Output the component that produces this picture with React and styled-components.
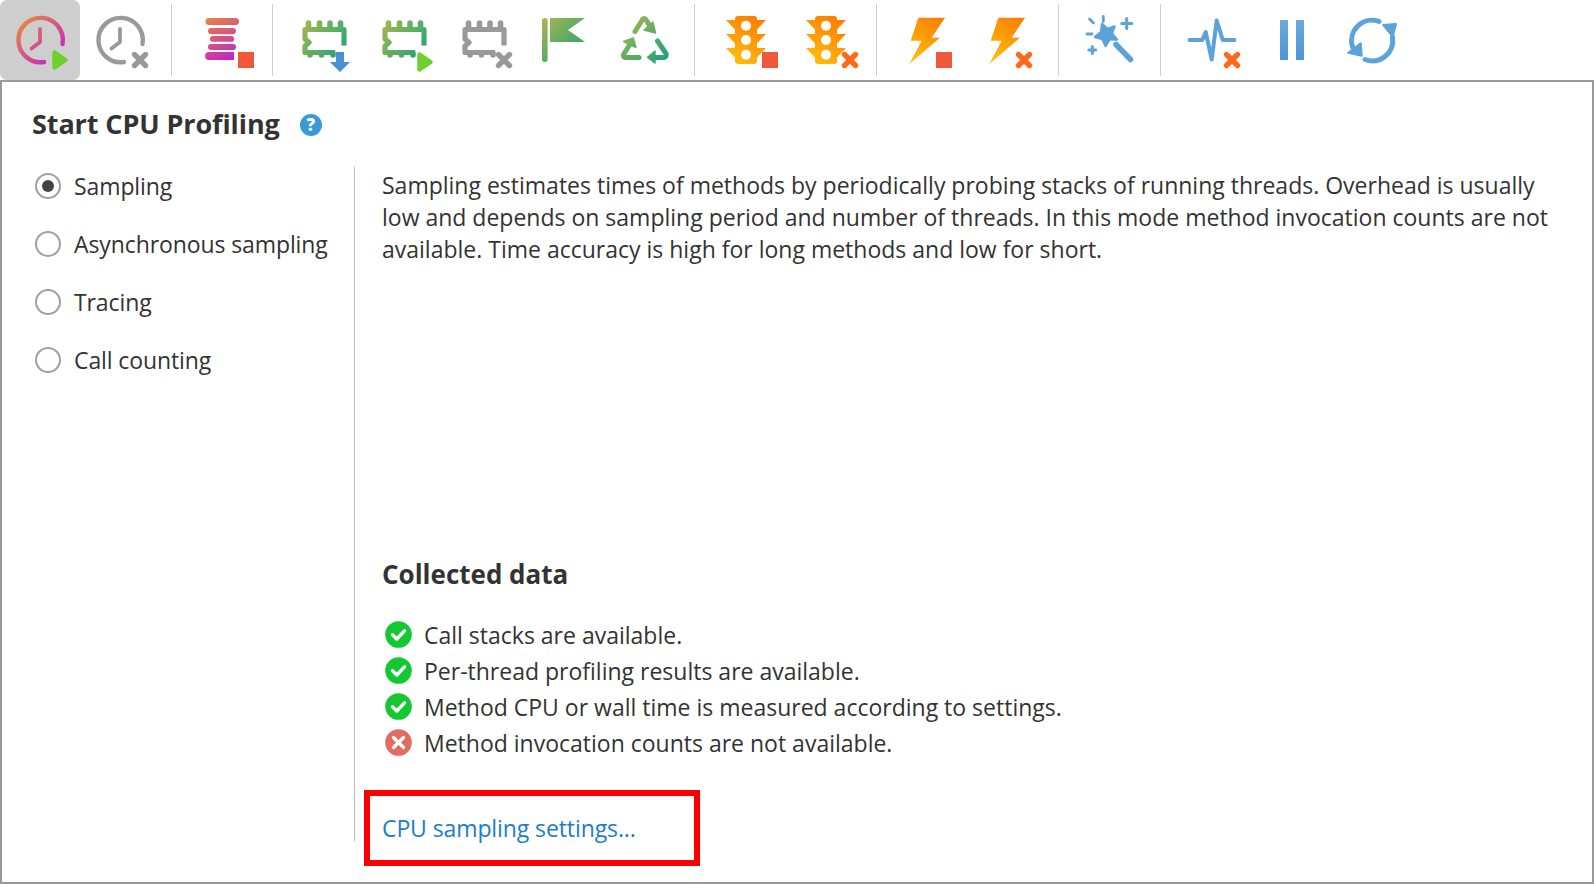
import React from 'react';
import styled, { createGlobalStyle } from 'styled-components';

const Global = createGlobalStyle`
  html, body { margin: 0; padding: 0; background: #fff; }
  body { font-family: "Open Sans", "Noto Sans", sans-serif; color: #333; }
  #root { width: 1594px; height: 884px; overflow: hidden; }
`;

const Page = styled.div`
  display: flex; flex-direction: column; width: 1594px; height: 884px; box-sizing: border-box;
`;
const Toolbar = styled.div`
  display: flex; align-items: center; height: 80px; flex: none;
`;
const ToolButton = styled.div`
  width: 80px; height: 80px; flex: none; border-radius: 7px;
  background: ${p => (p.$active ? '#cecece' : 'transparent')};
`;
const ToolSep = styled.div`
  width: 1px; height: 72px; flex: none; background: #cfcfcf;
  margin-left: 11px; margin-right: ${p => (p.$tight ? '9px' : '10px')};
`;
const IconSvg = styled.svg`
  display: block; width: 80px; height: 80px;
`;
const Panel = styled.div`
  flex: 1; min-height: 0; box-sizing: border-box;
  border: 2px solid #999; padding: 0 0 0 30px;
  display: flex; flex-direction: column;
`;
const Title = styled.div`
  display: flex; align-items: center; gap: 20px; height: 42px; margin-top: 21px; flex: none;
`;
const TitleText = styled.h1`
  margin: 0; font-size: 27px; font-weight: 700; line-height: 42px; color: #333; letter-spacing: -0.1px;
`;
const HelpBadge = styled.span`
  width: 22px; height: 22px; border-radius: 50%; background: #3a9ad9; color: #fff; margin-top: 2px;
  display: flex; align-items: center; justify-content: center;
  font-size: 17px; font-weight: 800; line-height: 22px;
`;
const Body = styled.div`
  display: flex; height: 674px; margin-top: 22px; flex: none;
`;
const Sidebar = styled.div`
  width: 323px; flex: none; box-sizing: border-box; border-right: 1px solid #bbb;
  display: flex; flex-direction: column; gap: 26px; padding: 3px 0 0 3px;
`;
const RadioRow = styled.label`
  display: flex; align-items: center; gap: 13px; height: 32px;
  font-size: 23px; letter-spacing: -0.1px; color: #333;
`;
const RadioMark = styled.span`
  width: 26px; height: 26px; box-sizing: border-box; border: 2px solid #a0a0a0; border-radius: 50%;
  display: flex; align-items: center; justify-content: center; flex: none;
  &::after {
    content: ''; width: 12px; height: 12px; border-radius: 50%;
    background: ${p => (p.$checked ? '#444' : 'transparent')};
  }
`;
const Main = styled.div`
  flex: 1; display: flex; flex-direction: column; padding: 2px 0 0 27px;
`;
const Description = styled.p`
  margin: 0; font-size: 23px; line-height: 32px; letter-spacing: 0; color: #333; white-space: nowrap;
`;
const Bottom = styled.div`
  margin-top: auto; display: flex; flex-direction: column;
`;
const SectionTitle = styled.h2`
  margin: 0 0 25px; font-size: 26px; line-height: 36px; font-weight: 700; color: #333; letter-spacing: 0;
`;
const DataList = styled.ul`
  list-style: none; margin: 0; padding: 0; display: flex; flex-direction: column;
`;
const DataRow = styled.li`
  display: flex; align-items: center; gap: 12px; height: 36px; padding-left: 3px;
  font-size: 23px; letter-spacing: 0; color: #333;
`;
const StatusSvg = styled.svg`
  width: 27px; height: 27px; flex: none; display: block; margin-top: -2px;
`;
const LinkWrap = styled.div`
  position: relative; margin-top: 51px; height: 32px; margin-bottom: -3px;
`;
const SettingsLink = styled.a`
  font-size: 23px; line-height: 32px; letter-spacing: -0.1px; color: #1a7dcf; text-decoration: none;
`;
const Highlight = styled.div`
  position: absolute; left: -18px; top: -22px; width: 336px; height: 76px;
  box-sizing: border-box; border: 6px solid #f00; pointer-events: none;
`;

const Grad = ({ id, x1, y1, x2, y2, from, to }) => (
  <defs>
    <linearGradient id={id} gradientUnits="userSpaceOnUse" x1={x1} y1={y1} x2={x2} y2={y2}>
      <stop offset="0" stopColor={from} />
      <stop offset="1" stopColor={to} />
    </linearGradient>
  </defs>
);

const Play = () => <polygon points="54.5,52.5 65.5,60 54.5,67.5" fill="#6cd12c" stroke="#6cd12c" strokeWidth="4.5" strokeLinejoin="round" />;
const Stop = ({ x = 57 }) => <rect x={x} y="52" width="16" height="16" fill="#ef583a" />;
const Cross = ({ cx, color }) => (
  <path d={`M${cx - 5.5} 54.5L${cx + 5.5} 65.5M${cx + 5.5} 54.5L${cx - 5.5} 65.5`} stroke={color} strokeWidth="5.4" strokeLinecap="round" fill="none" />
);

const Clock = ({ stroke }) => (
  <g fill="none" stroke={stroke} strokeLinecap="round" strokeLinejoin="round">
    <path d="M62.5 44A22.2 22.2 0 1 0 44 62" strokeWidth="4.4" />
    <path d="M40 29V42L31.5 48.5" strokeWidth="3.8" />
  </g>
);
const Chip = ({ stroke }) => (
  <g fill="none" stroke={stroke} strokeLinejoin="round">
    <path d="M61 45.5V29.5H22V39L26 42.5L22 46V52.5H52" strokeWidth="5.2" />
    <path d="M25.5 23V29M36.5 23V29M47 23V29M57.5 23V29M27 53V55M38.5 53V55M50 53V55" strokeWidth="5.6" strokeLinecap="round" />
  </g>
);

const magenta = { from: '#e98a38', to: '#bf1fd0' };
const green = { from: '#a8b84e', to: '#1fa278' };
const amber = { from: '#ffc010', to: '#ff7a00' };

const icons = [
  <IconSvg viewBox="0 0 80 80"><Grad id="g1" x1="20" y1="20" x2="60" y2="62" {...magenta} /><Clock stroke="url(#g1)" /><Play /></IconSvg>,
  <IconSvg viewBox="0 0 80 80"><Clock stroke="#999" /><Cross cx={60} color="#999" /></IconSvg>,
  <IconSvg viewBox="0 0 80 80">
    <Grad id="g3" x1="28" y1="14" x2="52" y2="62" {...magenta} />
    <g fill="url(#g3)">
      <rect x="24.5" y="18" width="33.5" height="7" rx="3.5" />
      <rect x="27" y="28" width="28" height="6.2" rx="3.1" />
      <rect x="29" y="36" width="24" height="5.8" rx="2.9" />
      <rect x="27" y="44" width="28" height="6" rx="3" />
      <path d="M28 52H53V60H28A4 4 0 0 1 28 52Z" />
    </g>
    <Stop />
  </IconSvg>,
  <IconSvg viewBox="0 0 80 80">
    <Grad id="g4" x1="20" y1="20" x2="62" y2="56" {...green} /><Chip stroke="url(#g4)" />
    <path d="M53 52H61V62H67L57 72L47 62H53Z" fill="#4a90d6" />
  </IconSvg>,
  <IconSvg viewBox="0 0 80 80"><Grad id="g5" x1="20" y1="20" x2="62" y2="56" {...green} /><Chip stroke="url(#g5)" /><g transform="translate(2 2)"><Play /></g></IconSvg>,
  <IconSvg viewBox="0 0 80 80"><Chip stroke="#999" /><Cross cx={61} color="#999" /></IconSvg>,
  <IconSvg viewBox="0 0 80 80">
    <Grad id="g7" x1="20" y1="18" x2="60" y2="58" {...green} />
    <rect x="19" y="18" width="5.6" height="44" rx="2.8" fill="url(#g7)" />
    <path d="M27 18H62L45 30L62 42H27Z" fill="url(#g7)" />
  </IconSvg>,
  <IconSvg viewBox="0 0 80 80">
    <Grad id="g8" x1="20" y1="18" x2="62" y2="62" {...green} />
    <g fill="url(#g8)" stroke="url(#g8)" strokeLinejoin="round" strokeWidth="1.4">
      <polygon points="41,30 52.5,33 50,22" />
      <polygon points="20.5,41.5 30.3,38 33,47.5" />
      <polygon points="52,51 44.5,57.3 52,63" />
    </g>
    <g fill="none" stroke="url(#g8)" strokeWidth="5" strokeLinecap="round" strokeLinejoin="round">
      <path d="M32 31.5L39.5 19.5Q41 17.5 42.8 19.5L47 26" />
      <path d="M36 57.5H22.5Q19.5 57 20.8 54L26.5 45" />
      <path d="M54.5 41L63 53.5Q64 57 61 57.5H48" />
    </g>
  </IconSvg>,
  ...[0, 1].map(i => (
    <IconSvg viewBox="0 0 80 80">
      <Grad id={`g9${i}`} x1="54" y1="16" x2="26" y2="64" from={amber.to} to={amber.from} />
      <path fill={`url(#g9${i})`} d="M33 16H49A3 3 0 0 1 52 19V20H61L52 29.5V34H61L52 43.5V48H61L52 57.5V61A3 3 0 0 1 49 64H33A3 3 0 0 1 30 61V57.5L21 48H30V43.5L21 34H30V29.5L21 20H30V19A3 3 0 0 1 33 16Z" />
      <circle cx="41" cy="25.7" r="5" fill="#fff" /><circle cx="41" cy="40" r="5" fill="#fff" /><circle cx="41" cy="54.7" r="5" fill="#fff" />
      {i === 0 ? <Stop /> : <Cross cx={65} color="#ff6a1a" />}
    </IconSvg>
  )),
  ...[0, 1].map(i => (
    <IconSvg viewBox="0 0 80 80">
      <Grad id={`g11${i}`} x1="56" y1="17" x2="24" y2="62" from={amber.to} to={amber.from} />
      <path fill={`url(#g11${i})`} d="M31.3 17.7H58L44.7 37.7H53L22.3 64L34.7 40.7H23.7Z" />
      {i === 0 ? <Stop x={49} /> : <Cross cx={57} color="#ff6a1a" />}
    </IconSvg>
  )),
  <IconSvg viewBox="0 0 80 80">
    <g stroke="#5ba3da" fill="none" strokeLinecap="round">
      <path d="M47 44.5L61.5 59.5" strokeWidth="5.6" />
      <path d="M57.7 18.5V28.5M52.7 23.5H62.7M23.3 46.5V53.5M19.8 50H26.8" strokeWidth="3" />
      <path d="M34.3 16.5V21.5M20.5 19L24.5 23M18 34H23" strokeWidth="2.8" />
    </g>
    <polygon fill="#5ba3da" stroke="#5ba3da" strokeWidth="2.4" strokeLinejoin="round" points="33,24 38.5,29 45.5,26.5 43,33.5 48,39.5 40.5,39.5 36.5,46 33.5,39 26,37 32,32" />
  </IconSvg>,
  <IconSvg viewBox="0 0 80 80">
    <path d="M18.5 40H31.3L34.7 32L40.7 59.5L45.7 20.5L51.7 40H63.5" fill="none" stroke="#5ba3da" strokeWidth="4" strokeLinecap="round" strokeLinejoin="round" />
    <Cross cx={61} color="#ff6a1a" />
  </IconSvg>,
  <IconSvg viewBox="0 0 80 80">
    <Grad id="g15" x1="0" y1="20" x2="0" y2="60" from="#6aa9d8" to="#4e95d8" />
    <rect x="29" y="20" width="8" height="40" fill="url(#g15)" />
    <rect x="45" y="20" width="8" height="40" fill="url(#g15)" />
  </IconSvg>,
  <IconSvg viewBox="0 0 80 80">
    <g fill="none" stroke="#5ba3da" strokeWidth="5" strokeLinecap="round">
      <path d="M21.5 47A20.5 20.5 0 0 1 48 21.5" />
      <path d="M61.5 37A20.5 20.5 0 0 1 34 59.5" />
    </g>
    <polygon points="52.3,25 65,24 61.7,36.7" fill="#5ba3da" stroke="#5ba3da" strokeWidth="2" strokeLinejoin="round" />
    <polygon points="17.3,52.7 30.7,55.7 29.7,43.3" fill="#5ba3da" stroke="#5ba3da" strokeWidth="2" strokeLinejoin="round" />
  </IconSvg>,
];

const groups = [
  { count: 2, tight: true }, { count: 1 }, { count: 5 }, { count: 2 }, { count: 2 }, { count: 1 }, { count: 3 },
];

const modes = ['Sampling', 'Asynchronous sampling', 'Tracing', 'Call counting'];
const collected = [
  ['Call stacks are available.', true],
  ['Per-thread profiling results are available.', true],
  ['Method CPU or wall time is measured according to settings.', true],
  ['Method invocation counts are not available.', false],
];

const Status = ({ ok }) => (
  <StatusSvg viewBox="0 0 27 27">
    <circle cx="13.5" cy="13.5" r="13.3" fill={ok ? '#14c832' : '#e26c60'} />
    <path d={ok ? 'M7.5 13.8L11.8 18L19.5 9.8' : 'M8.5 8.5L18.5 18.5M18.5 8.5L8.5 18.5'} fill="none" stroke="#fff" strokeWidth="3.4" strokeLinecap="round" strokeLinejoin="round" />
  </StatusSvg>
);

export default function App() {
  let index = 0;
  return (
    <Page>
      <Global />
      <Toolbar>
        {groups.map((g, gi) => (
          <React.Fragment key={gi}>
            {Array.from({ length: g.count }).map(() => {
              const i = index++;
              return <ToolButton key={i} $active={i === 0}>{React.cloneElement(icons[i], { key: i })}</ToolButton>;
            })}
            {gi < groups.length - 1 && <ToolSep $tight={g.tight} />}
          </React.Fragment>
        ))}
      </Toolbar>
      <Panel>
        <Title>
          <TitleText>Start CPU Profiling</TitleText>
          <HelpBadge>?</HelpBadge>
        </Title>
        <Body>
          <Sidebar>
            {modes.map((m, i) => (
              <RadioRow key={m}><RadioMark $checked={i === 0} />{m}</RadioRow>
            ))}
          </Sidebar>
          <Main>
            <Description>
              Sampling estimates times of methods by periodically probing stacks of running threads. Overhead is usually<br />
              low and depends on sampling period and number of threads. In this mode method invocation counts are not<br />
              available. Time accuracy is high for long methods and low for short.
            </Description>
            <Bottom>
              <SectionTitle>Collected data</SectionTitle>
              <DataList>
                {collected.map(([t, ok]) => (
                  <DataRow key={t}><Status ok={ok} />{t}</DataRow>
                ))}
              </DataList>
              <LinkWrap>
                <SettingsLink>CPU sampling settings...</SettingsLink>
                <Highlight />
              </LinkWrap>
            </Bottom>
          </Main>
        </Body>
      </Panel>
    </Page>
  );
}
